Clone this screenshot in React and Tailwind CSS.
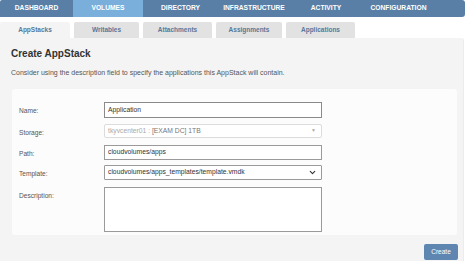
import { ChevronDown } from 'lucide-react';

const navItems = [
  { label: 'DASHBOARD', w: 'w-[73px]' },
  { label: 'VOLUMES', w: 'w-[70px]', active: true },
  { label: 'DIRECTORY', w: 'w-[75px]' },
  { label: 'INFRASTRUCTURE', w: 'w-[72px]' },
  { label: 'ACTIVITY', w: 'w-[72px]' },
  { label: 'CONFIGURATION', w: 'w-[73px]' },
];

const subTabs = [
  { label: 'AppStacks', w: 'w-[70px]', active: true },
  { label: 'Writables', w: 'w-[65px]' },
  { label: 'Attachments', w: 'w-[69px]' },
  { label: 'Assignments', w: 'w-[66px]' },
  { label: 'Applications', w: 'w-[69px]' },
];

const Row = ({ label, children, className = '' }) => (
  <div className={`flex ${className}`}>
    <div className="w-[85px] text-[6.6px] text-[#555] pt-[4px]">{label}</div>
    {children}
  </div>
);

const App = () => {
  return (
    <div className="w-[470px] h-[261px] bg-white overflow-hidden font-['Liberation_Sans',Arial,sans-serif]">
      <div className="w-[465px] h-[17px] flex bg-[#5a7fa6] rounded-tl-[2px] rounded-r-[3px] overflow-hidden">
        {navItems.map((item) => (
          <div
            key={item.label}
            className={`${item.w} h-full flex items-center justify-center text-[6.7px] font-bold text-white ${item.active ? 'bg-[#7aafdc]' : ''}`}
          >
            {item.label}
          </div>
        ))}
      </div>

      <div className="flex gap-[4px] mt-[5px] h-[16px]">
        {subTabs.map((tab) => (
          <div
            key={tab.label}
            className={`${tab.w} h-full flex items-center justify-center text-[6.5px] font-bold text-[#56789a] rounded-t-[2px] ${tab.active ? 'bg-[#f4f4f4]' : 'bg-[#e2e2e2]'}`}
          >
            {tab.label}
          </div>
        ))}
      </div>

      <div className="w-[464px] h-[224px] bg-[#f4f4f4] rounded-tr-[3px] border-r border-[#ececec] px-[11px]">
        <h1 className="text-[10px] font-bold text-[#333] pt-[11px] leading-none">Create AppStack</h1>
        <p className="text-[7px] text-[#555] mt-[10px] leading-none">
          Consider using the description field to specify the applications this AppStack will contain.
        </p>

        <div className="mt-[13px] ml-[1px] w-[445px] h-[146px] bg-[#fcfcfc] rounded-[3px] pl-[7px] pt-[13px] flex flex-col">
          <Row label="Name:">
            <div className="w-[218px] h-[16px] border border-[#8a8a8a] bg-white text-[6.75px] text-[#333] flex items-center px-[3px]">
              Application
            </div>
          </Row>
          <Row label="Storage:" className="mt-[6px]">
            <div className="w-[218px] h-[14px] border border-[#dcdcdc] rounded-[2px] bg-white text-[6.75px] flex items-center px-[3px] justify-between">
              <span>
                <span className="text-[#aaa]">tkyvcenter01 : </span>
                <span className="text-[#777]">[EXAM DC] 1TB</span>
              </span>
              <span className="text-[#aaa] text-[5px] mr-[2px]">▼</span>
            </div>
          </Row>
          <Row label="Path:" className="mt-[7px]">
            <div className="w-[218px] h-[15px] border border-[#9a9a9a] bg-white text-[6.75px] text-[#333] flex items-center px-[3px]">
              cloudvolumes/apps
            </div>
          </Row>
          <Row label="Template:" className="mt-[5px]">
            <div className="w-[218px] h-[15px] border border-[#9a9a9a] rounded-[1px] bg-white text-[6.75px] text-[#333] flex items-center px-[3px] justify-between">
              <span>cloudvolumes/apps_templates/template.vmdk</span>
              <ChevronDown className="w-[9px] h-[9px] text-[#333] mr-[1px]" strokeWidth={3} />
            </div>
          </Row>
          <Row label="Description:" className="mt-[7px]">
            <div className="w-[218px] h-[45px] border border-[#9a9a9a] bg-white" />
          </Row>
        </div>

        <div className="flex justify-end mt-[9px] mr-[-6px]">
          <button className="w-[34px] h-[16px] rounded-[2px] bg-[#5f86b0] text-white text-[6.5px] flex items-center justify-center">
            Create
          </button>
        </div>
      </div>
    </div>
  );
};

export default App;
